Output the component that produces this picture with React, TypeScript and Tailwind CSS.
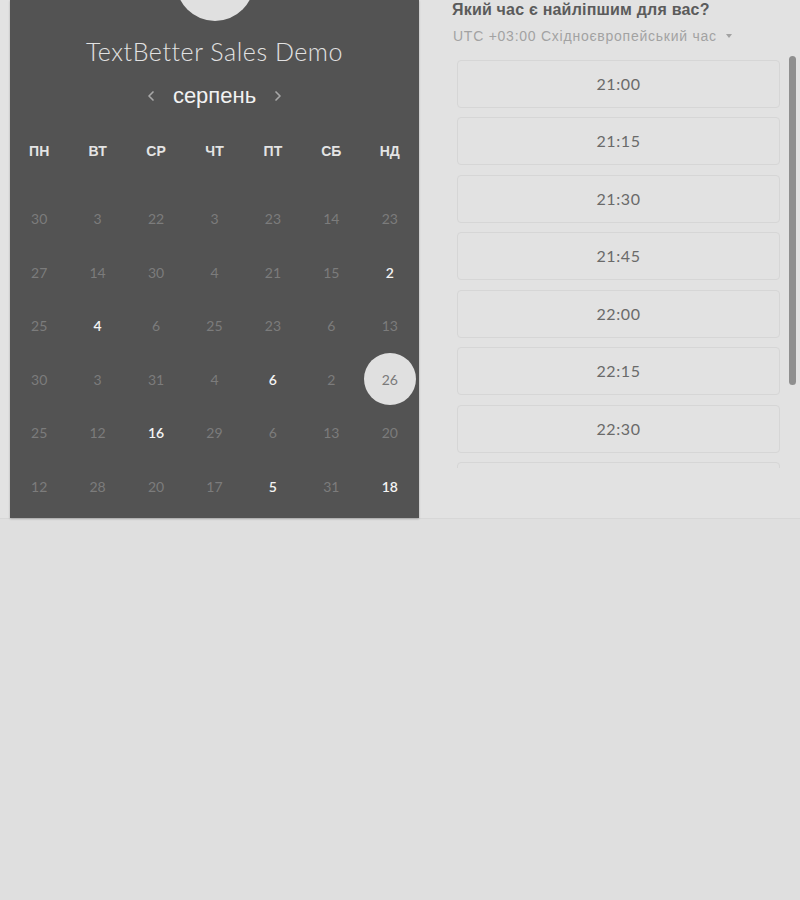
import { ChevronLeft, ChevronRight } from 'lucide-react'

const weekdays = ['ПН', 'ВТ', 'СР', 'ЧТ', 'ПТ', 'СБ', 'НД']

// [day, available]
const days: [number, boolean][] = [
  [30, false], [3, false], [22, false], [3, false], [23, false], [14, false], [23, false],
  [27, false], [14, false], [30, false], [4, false], [21, false], [15, false], [2, true],
  [25, false], [4, true], [6, false], [25, false], [23, false], [6, false], [13, false],
  [30, false], [3, false], [31, false], [4, false], [6, true], [2, false], [26, false],
  [25, false], [12, false], [16, true], [29, false], [6, false], [13, false], [20, false],
  [12, false], [28, false], [20, false], [17, false], [5, true], [31, false], [18, true],
]

const slots = ['21:00', '21:15', '21:30', '21:45', '22:00', '22:15', '22:30']

export default function App() {
  return (
    <div className="h-[900px] w-[800px] overflow-hidden bg-[#dfdfdf]">
      <div className="flex h-[519px] border-b border-[#d7d7d7] bg-[#e2e2e2]">
        {/* Calendar panel */}
        <div className="ml-[10px] flex h-[518px] w-[409px] flex-col overflow-hidden bg-[#535353] shadow-[0_1px_2px_rgba(0,0,0,0.25)]">
          <div className="mx-auto mt-[-57px] h-[78px] w-[78px] shrink-0 rounded-full bg-[#e0e0e0]" />
          <h1 className="mt-[15px] text-center font-['Lato',sans-serif] text-[25px] leading-[30px] font-light tracking-[0.55px] text-[#e2e2e2]">
            TextBetter Sales Demo
          </h1>
          <div className="mt-[15px] flex h-[30px] items-center justify-center gap-[14px]">
            <ChevronLeft className="h-[16px] w-[16px] text-[#a8a8a8]" strokeWidth={2.5} />
            <span className="font-['Liberation_Sans',sans-serif] text-[22px] leading-[30px] text-[#f2f2f2]">серпень</span>
            <ChevronRight className="h-[16px] w-[16px] text-[#a8a8a8]" strokeWidth={2.5} />
          </div>
          <div className="mt-[30px] grid grid-cols-7">
            {weekdays.map((d) => (
              <div key={d} className="flex h-[20px] items-center justify-center font-['Liberation_Sans',sans-serif] text-[14px] font-bold text-[#e4e4e4]">
                {d}
              </div>
            ))}
          </div>
          <div className="mt-[31px] grid grid-cols-7">
            {days.map(([n, available], i) => (
              <div key={i} className="flex h-[53.5px] items-center justify-center">
                {i === 27 ? (
                  <span className="flex h-[52px] w-[52px] items-center justify-center rounded-full bg-[#e0e0e0] font-['Lato',sans-serif] text-[14px] text-[#7a7a7a]">
                    {n}
                  </span>
                ) : (
                  <span
                    className={
                      available
                        ? "font-['Lato',sans-serif] text-[14px] font-semibold text-[#f4f4f4]"
                        : "font-['Lato',sans-serif] text-[14px] text-[#7c7c7c]"
                    }
                  >
                    {n}
                  </span>
                )}
              </div>
            ))}
          </div>
        </div>

        {/* Time slots */}
        <div className="flex flex-1 flex-col">
          <p className="pl-[33px] font-['Liberation_Sans',sans-serif] text-[16px] leading-[20px] font-bold tracking-[0.2px] text-[#5b5b5b]">
            Який час є найліпшим для вас?
          </p>
          <div className="mt-[7px] flex items-center gap-[9px] pl-[34px] font-['Liberation_Sans',sans-serif] text-[14px] leading-[18px] tracking-[0.75px] text-[#a2a2a2]">
            <span>UTC +03:00 Східноєвропейський час</span>
            <span className="h-0 w-0 border-x-[3.5px] border-t-[4px] border-x-transparent border-t-[#a2a2a2]" />
          </div>
          <div className="mt-[11px] flex h-[412px] overflow-hidden pl-[38px]">
            <div className="flex w-[323px] flex-col gap-[9.43px] pt-[4px]">
              {slots.map((s) => (
                <div
                  key={s}
                  className="flex h-[48px] shrink-0 items-center justify-center rounded-[4px] border border-[#d6d6d6] font-['Lato',sans-serif] text-[16px] tracking-[0.6px] text-[#6a6a6a]"
                >
                  {s}
                </div>
              ))}
              {/* next slot, scrolled out of view */}
              <div className="h-[48px] shrink-0 rounded-[4px] border border-[#d6d6d6]" />
            </div>
            <div className="ml-[9px] h-[329px] w-[7px] rounded-full bg-[#8f8f8f]" />
          </div>
        </div>
      </div>
    </div>
  )
}
